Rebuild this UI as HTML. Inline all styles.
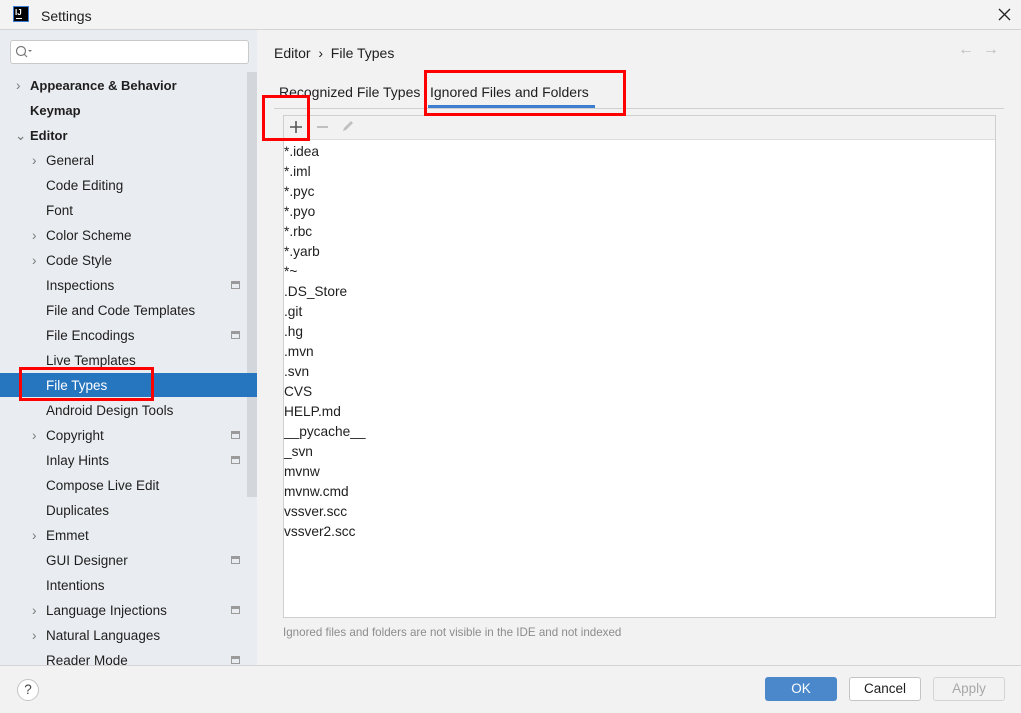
<!DOCTYPE html>
<html><head><meta charset="utf-8"><style>
*{margin:0;padding:0;box-sizing:border-box}
body{width:1021px;height:713px;overflow:hidden;background:#f2f2f2;font-family:"Liberation Sans",sans-serif;font-size:13.5px;color:#1e1e1e;position:relative}
.a{position:absolute}
.t{position:absolute;white-space:nowrap;line-height:16px}
.red{position:absolute;border:3px solid #f00}
.ic{position:absolute;width:9px;height:8px;border:1px solid #9a9a9a;border-top-width:3px}
</style></head><body>
<div class="a" style="left:0;top:0;width:1021px;height:30px;background:#f3f3f3;border-bottom:1px solid #d4d4d4"></div>
<div class="a" style="left:13px;top:6px;width:16px;height:16px;background:#000;border:1px solid #3a7bd5"></div>
<div class="t" style="left:15px;top:5px;color:#fff;font-size:8px;font-weight:bold">IJ</div>
<div class="a" style="left:16px;top:18px;width:6px;height:1px;background:#fff"></div>
<div class="t" style="left:41px;top:8px;font-size:14px">Settings</div>
<svg class="a" style="left:998px;top:8px" width="13" height="13"><path d="M1 1L12 12M12 1L1 12" stroke="#222" stroke-width="1.3"/></svg>

<div class="a" style="left:0;top:30px;width:257px;height:635px;background:#e9ecf0"></div>
<div class="a" style="left:247px;top:72px;width:10px;height:425px;background:#d3d6da"></div>
<div class="a" style="left:10px;top:40px;width:239px;height:24px;background:#fff;border:1px solid #c9c9c9;border-radius:3px"></div>
<svg class="a" style="left:15px;top:45px" width="18" height="14"><circle cx="6" cy="6" r="4.5" fill="none" stroke="#777" stroke-width="1.2"/><line x1="9" y1="9" x2="12" y2="12" stroke="#777" stroke-width="1.2"/><path d="M13 5l2 2 2-2z" fill="#777"/></svg>
<div class="a" style="left:0;top:373px;width:257px;height:24px;background:#2675bf"></div>

<div class="t" style="left:16px;top:78px;color:#777">›</div>
<div class="t" style="left:30px;top:78px;font-weight:bold;font-size:13px">Appearance &amp; Behavior</div>
<div class="t" style="left:30px;top:103px;font-weight:bold;font-size:13px">Keymap</div>
<div class="t" style="left:15px;top:128px;color:#777">⌄</div>
<div class="t" style="left:30px;top:128px;font-weight:bold;font-size:13px">Editor</div>
<div class="t" style="left:32px;top:153px;color:#777">›</div><div class="t" style="left:46px;top:153px">General</div>
<div class="t" style="left:46px;top:178px">Code Editing</div>
<div class="t" style="left:46px;top:203px">Font</div>
<div class="t" style="left:32px;top:228px;color:#777">›</div><div class="t" style="left:46px;top:228px">Color Scheme</div>
<div class="t" style="left:32px;top:253px;color:#777">›</div><div class="t" style="left:46px;top:253px">Code Style</div>
<div class="t" style="left:46px;top:278px">Inspections</div><div class="ic" style="left:231px;top:281px"></div>
<div class="t" style="left:46px;top:303px">File and Code Templates</div>
<div class="t" style="left:46px;top:328px">File Encodings</div><div class="ic" style="left:231px;top:331px"></div>
<div class="t" style="left:46px;top:353px">Live Templates</div>
<div class="t" style="left:46px;top:378px;color:#fff">File Types</div>
<div class="t" style="left:46px;top:403px">Android Design Tools</div>
<div class="t" style="left:32px;top:428px;color:#777">›</div><div class="t" style="left:46px;top:428px">Copyright</div><div class="ic" style="left:231px;top:431px"></div>
<div class="t" style="left:46px;top:453px">Inlay Hints</div><div class="ic" style="left:231px;top:456px"></div>
<div class="t" style="left:46px;top:478px">Compose Live Edit</div>
<div class="t" style="left:46px;top:503px">Duplicates</div>
<div class="t" style="left:32px;top:528px;color:#777">›</div><div class="t" style="left:46px;top:528px">Emmet</div>
<div class="t" style="left:46px;top:553px">GUI Designer</div><div class="ic" style="left:231px;top:556px"></div>
<div class="t" style="left:46px;top:578px">Intentions</div>
<div class="t" style="left:32px;top:603px;color:#777">›</div><div class="t" style="left:46px;top:603px">Language Injections</div><div class="ic" style="left:231px;top:606px"></div>
<div class="t" style="left:32px;top:628px;color:#777">›</div><div class="t" style="left:46px;top:628px">Natural Languages</div>
<div class="t" style="left:46px;top:653px">Reader Mode</div><div class="ic" style="left:231px;top:656px"></div>
<div class="red" style="left:19px;top:367px;width:135px;height:34px"></div>

<div class="t" style="left:274px;top:45px;font-size:14px">Editor &nbsp;›&nbsp; File Types</div>
<div class="t" style="left:958px;top:42px;color:#bbb;font-size:16px">← &nbsp;→</div>
<div class="t" style="left:279px;top:84px;font-size:14px">Recognized File Types</div>
<div class="t" style="left:430px;top:84px;font-size:14px">Ignored Files and Folders</div>
<div class="a" style="left:428px;top:105px;width:167px;height:3px;background:#3d7fce"></div>
<div class="a" style="left:274px;top:108px;width:730px;height:1px;background:#d0d0d0"></div>
<div class="a" style="left:283px;top:115px;width:713px;height:503px;background:#fff;border:1px solid #cfcfcf"></div>
<div class="a" style="left:284px;top:116px;width:711px;height:24px;background:#f2f2f2;border-bottom:1px solid #ddd"></div>
<svg class="a" style="left:290px;top:121px" width="12" height="12"><path d="M6 0V12M0 6H12" stroke="#555" stroke-width="1.6"/></svg>
<div class="a" style="left:317px;top:126px;width:11px;height:1.5px;background:#c0c0c0"></div>
<svg class="a" style="left:341px;top:119px" width="14" height="14"><path d="M2 12l1-3 7-7 2 2-7 7z" fill="#c0c0c0"/></svg>
<div class="red" style="left:262px;top:95px;width:48px;height:46px"></div>
<div class="red" style="left:424px;top:70px;width:202px;height:46px"></div>
<div class="a" style="left:284px;top:142px;line-height:20px;font-size:13.7px">*.idea<br>*.iml<br>*.pyc<br>*.pyo<br>*.rbc<br>*.yarb<br>*~<br>.DS_Store<br>.git<br>.hg<br>.mvn<br>.svn<br>CVS<br>HELP.md<br>__pycache__<br>_svn<br>mvnw<br>mvnw.cmd<br>vssver.scc<br>vssver2.scc</div>
<div class="t" style="left:283px;top:625px;font-size:11.6px;color:#8c8c8c">Ignored files and folders are not visible in the IDE and not indexed</div>

<div class="a" style="left:0;top:665px;width:1021px;height:1px;background:#d4d4d4"></div>
<div class="a" style="left:17px;top:679px;width:22px;height:22px;border:1px solid #c4c4c4;border-radius:50%;background:#fff;text-align:center;line-height:20px;color:#444">?</div>
<div class="a" style="left:765px;top:677px;width:72px;height:24px;background:#4a88cb;border-radius:3px;color:#fff;text-align:center;line-height:24px">OK</div>
<div class="a" style="left:849px;top:677px;width:72px;height:24px;background:#fff;border:1px solid #c4c4c4;border-radius:3px;text-align:center;line-height:22px">Cancel</div>
<div class="a" style="left:933px;top:677px;width:72px;height:24px;background:#f2f2f2;border:1px solid #d4d4d4;border-radius:3px;text-align:center;line-height:22px;color:#a8a8a8">Apply</div>
</body></html>
